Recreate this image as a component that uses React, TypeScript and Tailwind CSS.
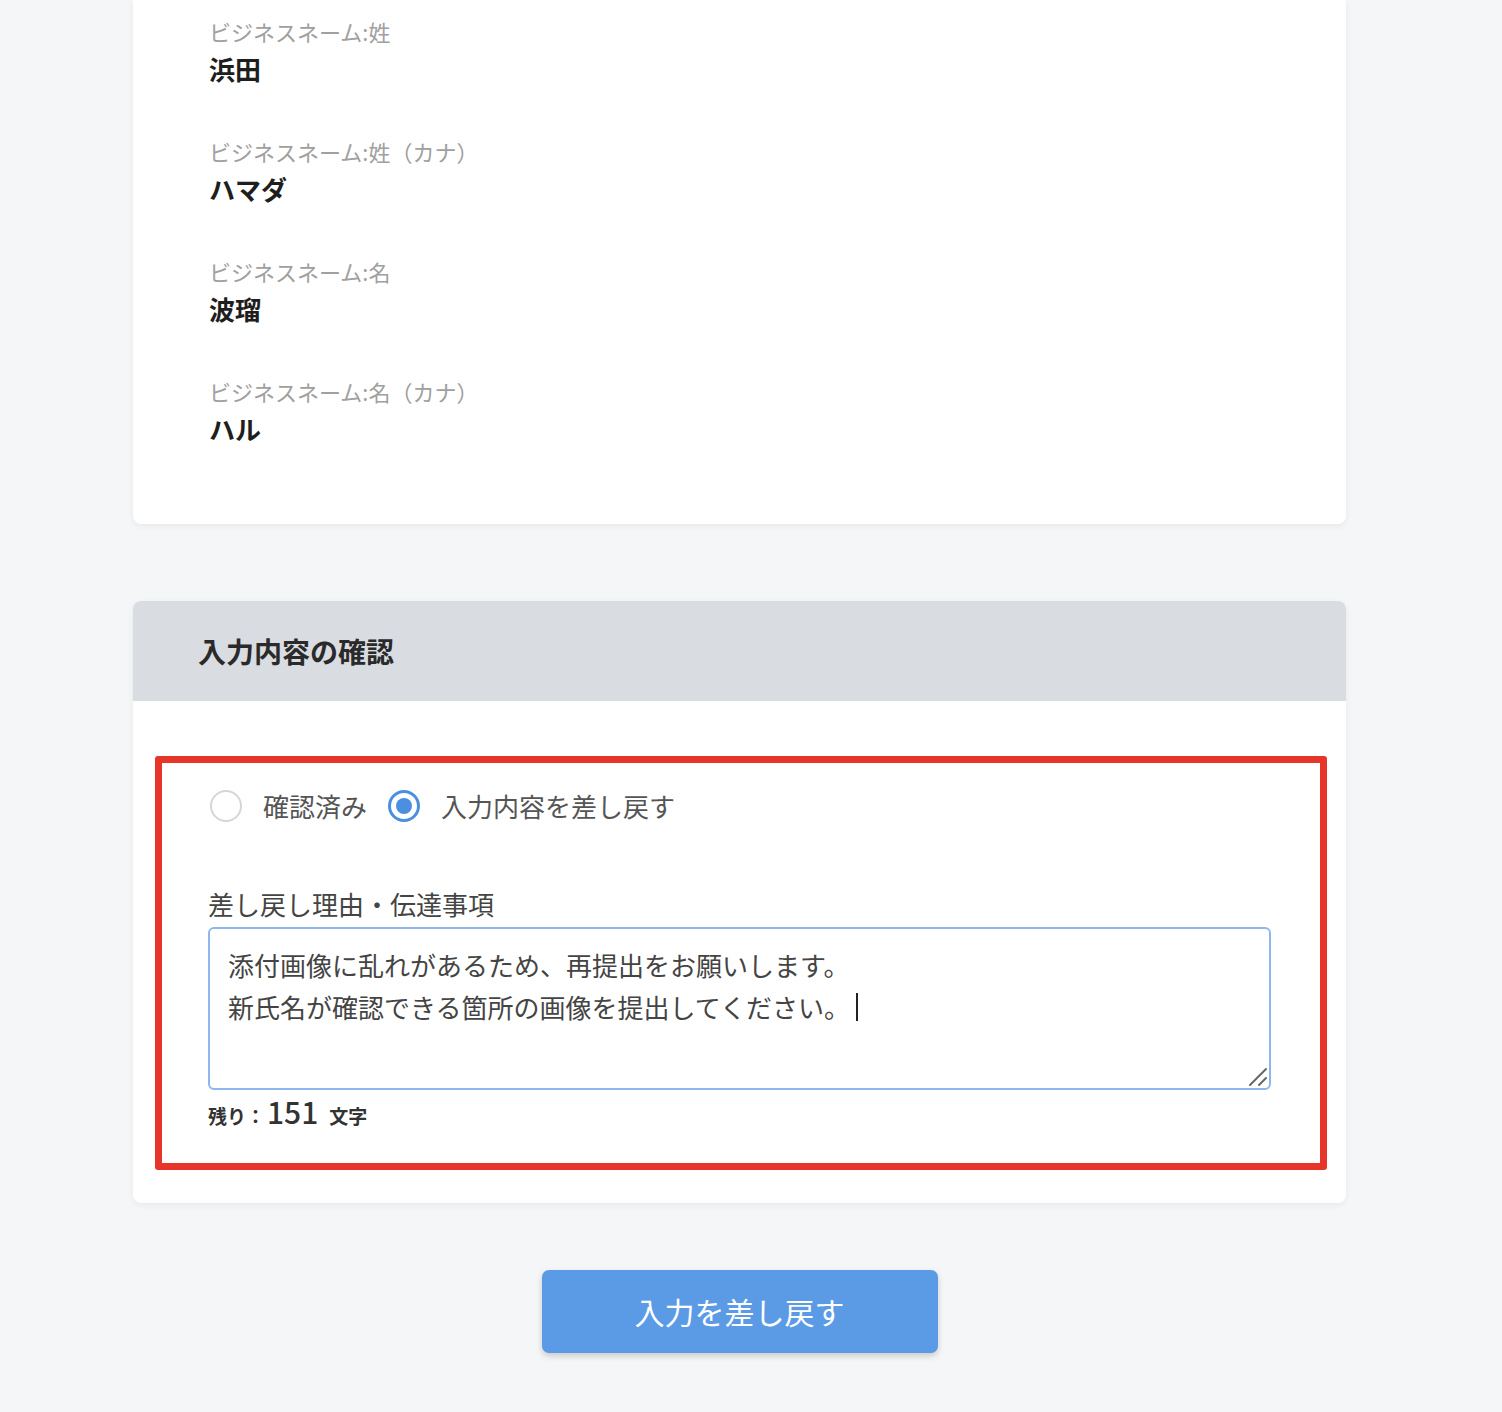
import React from 'react';

const fields = [
  { label: 'ビジネスネーム:姓', value: '浜田' },
  { label: 'ビジネスネーム:姓（カナ）', value: 'ハマダ' },
  { label: 'ビジネスネーム:名', value: '波瑠' },
  { label: 'ビジネスネーム:名（カナ）', value: 'ハル' },
];

function Radio({ checked, label }: { checked: boolean; label: string }) {
  return (
    <label className="flex items-center h-[40px]">
      {checked ? (
        <span className="w-[32px] h-[32px] rounded-full border-[3px] border-[#4a8fe0] flex items-center justify-center">
          <span className="w-[16px] h-[16px] rounded-full bg-[#4a8fe0]" />
        </span>
      ) : (
        <span className="w-[32px] h-[32px] rounded-full border-2 border-[#d4d6d9] bg-white" />
      )}
      <span className="ml-[21px] text-[26px] leading-[40px] text-[#555]">{label}</span>
    </label>
  );
}

export default function App() {
  return (
    <div
      className="min-h-[1412px] bg-[#f5f6f8] pb-[57px]"
      style={{ fontFamily: '"Noto Sans CJK JP", "Noto Sans", sans-serif' }}
    >
      <div className="ml-[133px] w-[1213px]">
        {/* 入力済み情報 */}
        <div className="bg-white rounded-b-lg shadow-[0_2px_6px_rgba(0,0,0,0.06)] pl-[76px] pt-[16px] pb-[77px] flex flex-col gap-[49px]">
          {fields.map((f) => (
            <div key={f.label}>
              <div className="text-[22px] leading-[30px] text-[#a0a0a0]">{f.label}</div>
              <div className="mt-[5px] text-[26px] leading-[36px] font-bold text-[#1e1e1e]">{f.value}</div>
            </div>
          ))}
        </div>

        {/* 入力内容の確認 */}
        <div className="mt-[77px] bg-white rounded-lg shadow-[0_2px_6px_rgba(0,0,0,0.06)] overflow-hidden">
          <div className="h-[100px] bg-[#d9dde1] px-[65px] flex items-center">
            <h2 className="text-[28px] font-bold text-[#2a2a2a]">入力内容の確認</h2>
          </div>
          <div className="pt-[55px] pl-[22px] pr-[19px] pb-[33px]">
            <div className="border-[7px] border-[#e8352a] rounded-[3px] pl-[46px] pr-[49px] pt-[23px] pb-[29px]">
              <div className="flex items-center gap-[21px] pl-[2px]">
                <Radio checked={false} label="確認済み" />
                <Radio checked label="入力内容を差し戻す" />
              </div>

              <div className="mt-[61px] text-[26px] leading-[34px] text-[#444]">差し戻し理由・伝達事項</div>
              <div className="relative mt-[6px] h-[163px] border-2 border-[#8db7ee] rounded-[6px] px-[18px] pt-[15px] text-[26px] leading-[42px] text-[#444]">
                <div>添付画像に乱れがあるため、再提出をお願いします。</div>
                <div className="flex items-center">
                  新氏名が確認できる箇所の画像を提出してください。
                  <span className="ml-[6px] inline-block w-[2px] h-[28px] bg-[#222]" />
                </div>
                <svg className="absolute right-[1px] bottom-[1px]" width="20" height="20" viewBox="0 0 20 20">
                  <path d="M2 18 L18 2" stroke="#666" strokeWidth="2" strokeLinecap="round" />
                  <path d="M11 18 L18 11" stroke="#666" strokeWidth="2" strokeLinecap="round" />
                </svg>
              </div>
              <div className="mt-[3px] flex items-baseline text-[#333] font-bold leading-[36px]">
                <span className="text-[19px]">残り：</span>
                <span className="text-[30px] font-medium ml-[2px] mr-[11px]">151</span>
                <span className="text-[19px]">文字</span>
              </div>
            </div>
          </div>
        </div>

        <div className="mt-[67px] flex justify-center">
          <button className="w-[396px] h-[83px] rounded-[7px] bg-[#5b9be6] text-white text-[30px] shadow-[0_3px_6px_rgba(0,0,0,0.18)]">
            入力を差し戻す
          </button>
        </div>
      </div>
    </div>
  );
}
